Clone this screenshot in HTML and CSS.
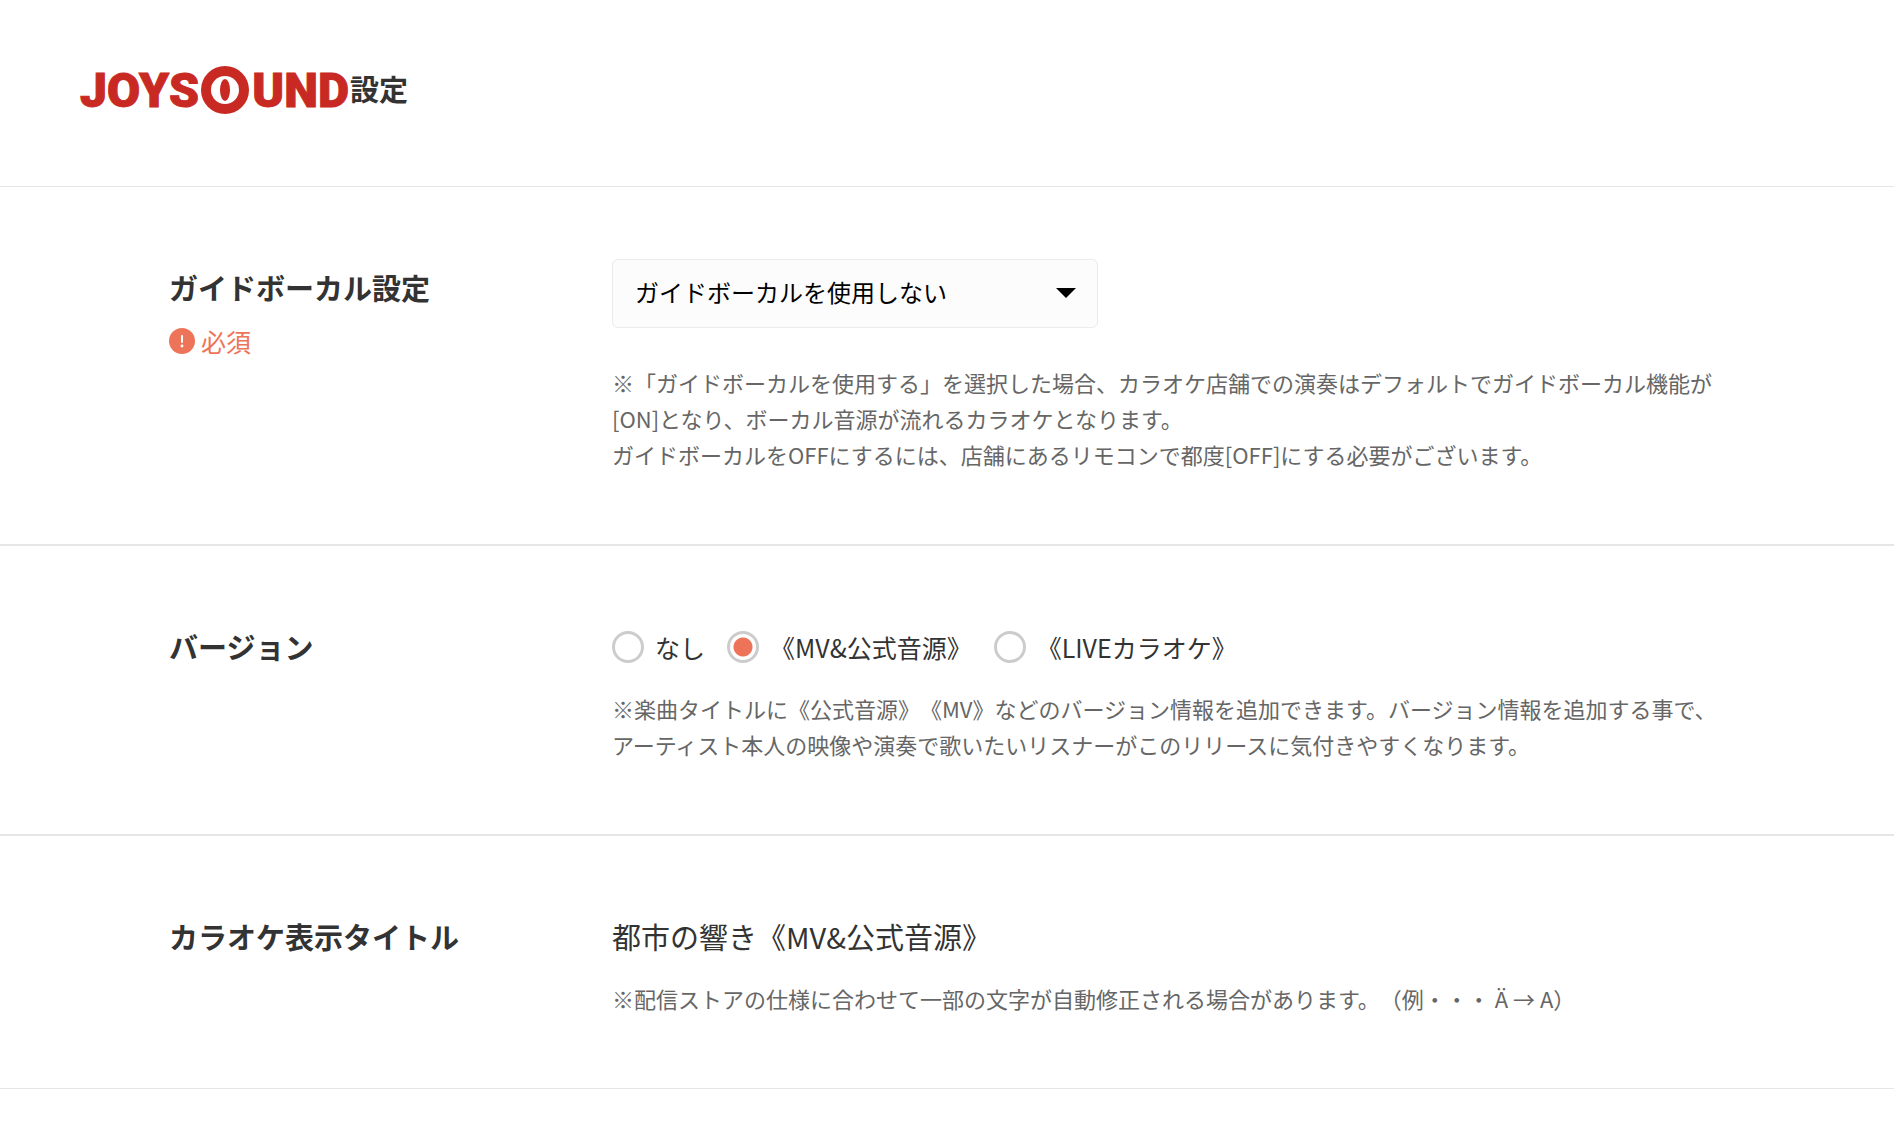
FILE: index.html
```
<!DOCTYPE html>

<html lang="ja">
<head>

    <meta charset="utf-8" />

    <title>JOYSOUND設定</title>

    <link rel="stylesheet" href="styles.css">
</head>
<body>
    <header class="page-header">
        <h1 class="page-title">
            <svg class="logo" width="270" height="50" viewBox="0 0 270 50" role="img" aria-label="JOYSOUND">
                <text class="logo-text" x="0" y="42">JOYS</text>
                <circle cx="145" cy="25" r="24" />
                <circle class="logo-hole" cx="145" cy="25" r="14" />
                <ellipse cx="145" cy="25" rx="5" ry="11" />
                <text class="logo-text" x="269" y="42" text-anchor="end">UND</text>
            </svg>
            <span>設定</span>
        </h1>
    </header>

    <form class="settings">
        <section class="setting-row">
            <div class="setting-label">
                <h2><label for="guide_vocal">ガイドボーカル設定</label></h2>
                <p class="required">
                    <svg width="26" height="26" viewBox="0 0 26 26" aria-hidden="true">
                        <circle cx="13" cy="13" r="13" fill="#ee7459" />
                        <path d="M13 8v6" stroke="#fff" stroke-width="2" stroke-linecap="round" />
                        <circle cx="13" cy="18" r="1.4" fill="#fff" />
                    </svg>
                    必須
                </p>
            </div>
            <div class="setting-body">
                <div class="select-box">
                    <select id="guide_vocal">
                        <option selected>ガイドボーカルを使用しない</option>
                        <option>ガイドボーカルを使用する</option>
                    </select>
                </div>
                <p class="note">
                    ※「ガイドボーカルを使用する」を選択した場合、カラオケ店舗での演奏はデフォルトでガイドボーカル機能が[ON]となり、ボーカル音源が流れるカラオケとなります。<br>
                    ガイドボーカルをOFFにするには、店舗にあるリモコンで都度[OFF]にする必要がございます。
                </p>
            </div>
        </section>

        <section class="setting-row">
            <div class="setting-label">
                <h2>バージョン</h2>
            </div>
            <div class="setting-body">
                <div class="radio-list">
                    <label><input type="radio" name="version" value="none">なし</label>
                    <label><input type="radio" name="version" value="mv" checked>《MV&amp;公式音源》</label>
                    <label><input type="radio" name="version" value="live">《LIVEカラオケ》</label>
                </div>
                <p class="note">
                    ※楽曲タイトルに《公式音源》《MV》などのバージョン情報を追加できます。バージョン情報を追加する事で、アーティスト本人の映像や演奏で歌いたいリスナーがこのリリースに気付きやすくなります。
                </p>
            </div>
        </section>

        <section class="setting-row">
            <div class="setting-label">
                <h2>カラオケ表示タイトル</h2>
            </div>
            <div class="setting-body">
                <p class="karaoke-title">都市の響き《MV&amp;公式音源》</p>
                <p class="note">※配信ストアの仕様に合わせて一部の文字が自動修正される場合があります。（例・・・ Ä → A）</p>
            </div>
        </section>
    </form>

</body>
</html>
```

FILE: styles.css
```
* {
    box-sizing: border-box;
}

body {
    margin: 0;
    background-color: #fff;
    color: #333;
    font-family: "Noto Sans CJK JP", sans-serif;
    text-spacing-trim: space-all;
}

h1, h2, p {
    margin: 0;
}

.page-header {
    padding: 60px 80px 66px;
    border-bottom: 1px solid #e6e6e6;
}

.page-title {
    display: flex;
    align-items: center;
    height: 60px;
    font-size: 29px;
    line-height: 56px;
}

    .page-title span {
        padding-bottom: 4px;
    }

.logo {
    fill: #c82a23;
    overflow: visible;
}

.logo-text {
    font-family: Roboto, sans-serif;
    font-size: 48px;
    font-weight: 900;
    stroke: #c82a23;
    stroke-width: 1px;
}

.logo-hole {
    fill: #fff;
}

.setting-row {
    display: grid;
    grid-template-columns: 443px 1fr;
    padding: 72px 169px;
    border-bottom: 2px solid #e6e6e6;
}

    .setting-row:last-child {
        border-bottom-width: 1px;
    }

.setting-label h2 {
    font-size: 29px;
    line-height: 56px;
}

.required {
    display: flex;
    align-items: center;
    gap: 6px;
    color: #ee7459;
    font-size: 25px;
    line-height: 52px;
}

.select-box {
    position: relative;
    max-width: 486px;
    margin-bottom: 36px;
}

    .select-box::after {
        content: "";
        position: absolute;
        top: 29px;
        right: 22px;
        border: 10px solid transparent;
        border-top-color: #000;
        border-bottom: 0;
        pointer-events: none;
    }

.select-box select {
    display: block;
    width: 100%;
    height: 69px;
    padding: 0 60px 4px 22px;
    appearance: none;
    border: 1px solid #ebebeb;
    border-radius: 6px;
    background-color: #fcfcfc;
    color: #000;
    font-family: inherit;
    font-size: 24px;
}

.note {
    color: #666;
    font-size: 22px;
    line-height: 36px;
}

.radio-list {
    display: flex;
    gap: 22px;
    margin-bottom: 14px;
    font-size: 25px;
    line-height: 58px;
}

    .radio-list label {
        display: flex;
        align-items: center;
        gap: 11px;
    }

.radio-list input {
    width: 32px;
    height: 32px;
    margin: 0;
    appearance: none;
    border: 3px solid #ccc;
    border-radius: 50%;
    background-color: #fff;
}

    .radio-list input:checked {
        background-image: radial-gradient(circle, #ee7459 9px, #fff 10px);
    }

.karaoke-title {
    padding-bottom: 4px;
    margin-bottom: 12px;
    font-size: 29px;
    line-height: 56px;
}
```
